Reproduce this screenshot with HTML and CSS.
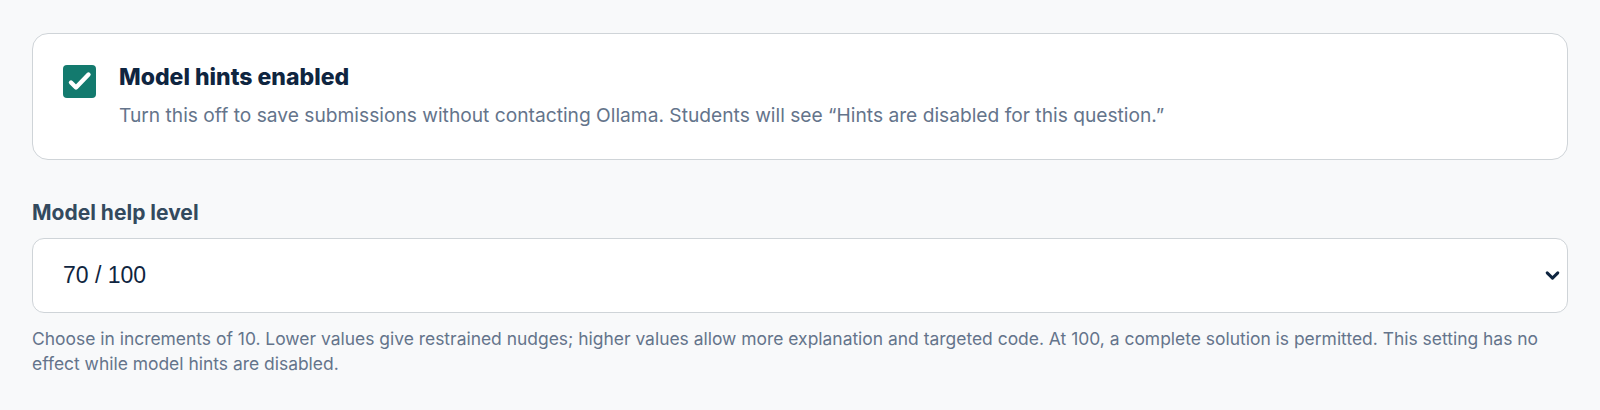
FILE: index.html
```html
<!DOCTYPE html>
<html lang="en">
<head>
  <meta charset="UTF-8" />
  <title>Model hint settings</title>
  <link rel="stylesheet" href="styles.css">
</head>
<body>
  <div class="settings">
    <label class="toggle-card">
      <span class="check-box">
        <svg viewBox="0 0 33 33" width="33" height="33" aria-hidden="true">
          <path d="M8 17.5l5 5L25.5 9.5" fill="none" stroke="#fff" stroke-width="4.4" stroke-linecap="round" stroke-linejoin="round"/>
        </svg>
      </span>
      <span class="toggle-text">
        <span class="toggle-title">Model hints enabled</span>
        <span class="toggle-desc">Turn this off to save submissions without contacting Ollama. Students will see “Hints are disabled for this question.”</span>
      </span>
    </label>

    <div class="field">
      <label class="field-label" for="helpLevel">Model help level</label>
      <div class="select-wrap">
        <div class="select" id="helpLevel">70 / 100</div>
        <svg class="chevron" viewBox="0 0 16 16" width="17" height="17" aria-hidden="true">
          <path d="M3 5.5l5 5 5-5" fill="none" stroke="#0f2540" stroke-width="2.8" stroke-linecap="round" stroke-linejoin="round"/>
        </svg>
      </div>
      <p class="field-help">Choose in increments of 10. Lower values give restrained nudges; higher values allow more explanation and targeted code. At 100, a complete solution is permitted. This setting has no effect while model hints are disabled.</p>
    </div>
  </div>
</body>
</html>
```

FILE: styles.css
```css
* {
  box-sizing: border-box;
}
body {
  margin: 0;
  background: #f8f9fa;
  font-family: Inter, "Noto Sans", sans-serif;
  color: #0f2540;
}
.settings {
  padding: 33px 32px 0 32px;
}

.toggle-card {
  display: flex;
  align-items: flex-start;
  gap: 23px;
  background: #fff;
  border: 1.5px solid #cfd4d8;
  border-radius: 16px;
  padding: 28px 30px 31px 30px;
}
.check-box {
  flex: none;
  width: 33px;
  height: 33px;
  margin-top: 3px;
  border-radius: 4px;
  background: #137a6e;
  display: flex;
  align-items: center;
  justify-content: center;
}
.toggle-text {
  display: flex;
  flex-direction: column;
  gap: 10px;
}
.toggle-title {
  font-size: 23px;
  font-weight: 800;
  line-height: 30px;
  color: #0f2540;
}
.toggle-desc {
  font-size: 19.2px;
  line-height: 26px;
  color: #64748b;
}

.field {
  margin-top: 39px;
}
.field-label {
  display: block;
  font-size: 21px;
  font-weight: 700;
  line-height: 28px;
  color: #334a5e;
  margin-bottom: 11px;
}
.select-wrap {
  position: relative;
}
.select {
  height: 74.5px;
  background: #fff;
  border: 1.5px solid #cfd4d8;
  border-radius: 12px;
  padding: 0 30px;
  display: flex;
  align-items: center;
  font-family: "Liberation Sans", Arial, sans-serif;
  font-size: 23px;
  color: #0f2540;
}
.chevron {
  position: absolute;
  right: 7px;
  top: 28.5px;
}
.field-help {
  margin: 13px 0 0;
  font-size: 17.45px;
  line-height: 25.5px;
  color: #64748b;
}
```
